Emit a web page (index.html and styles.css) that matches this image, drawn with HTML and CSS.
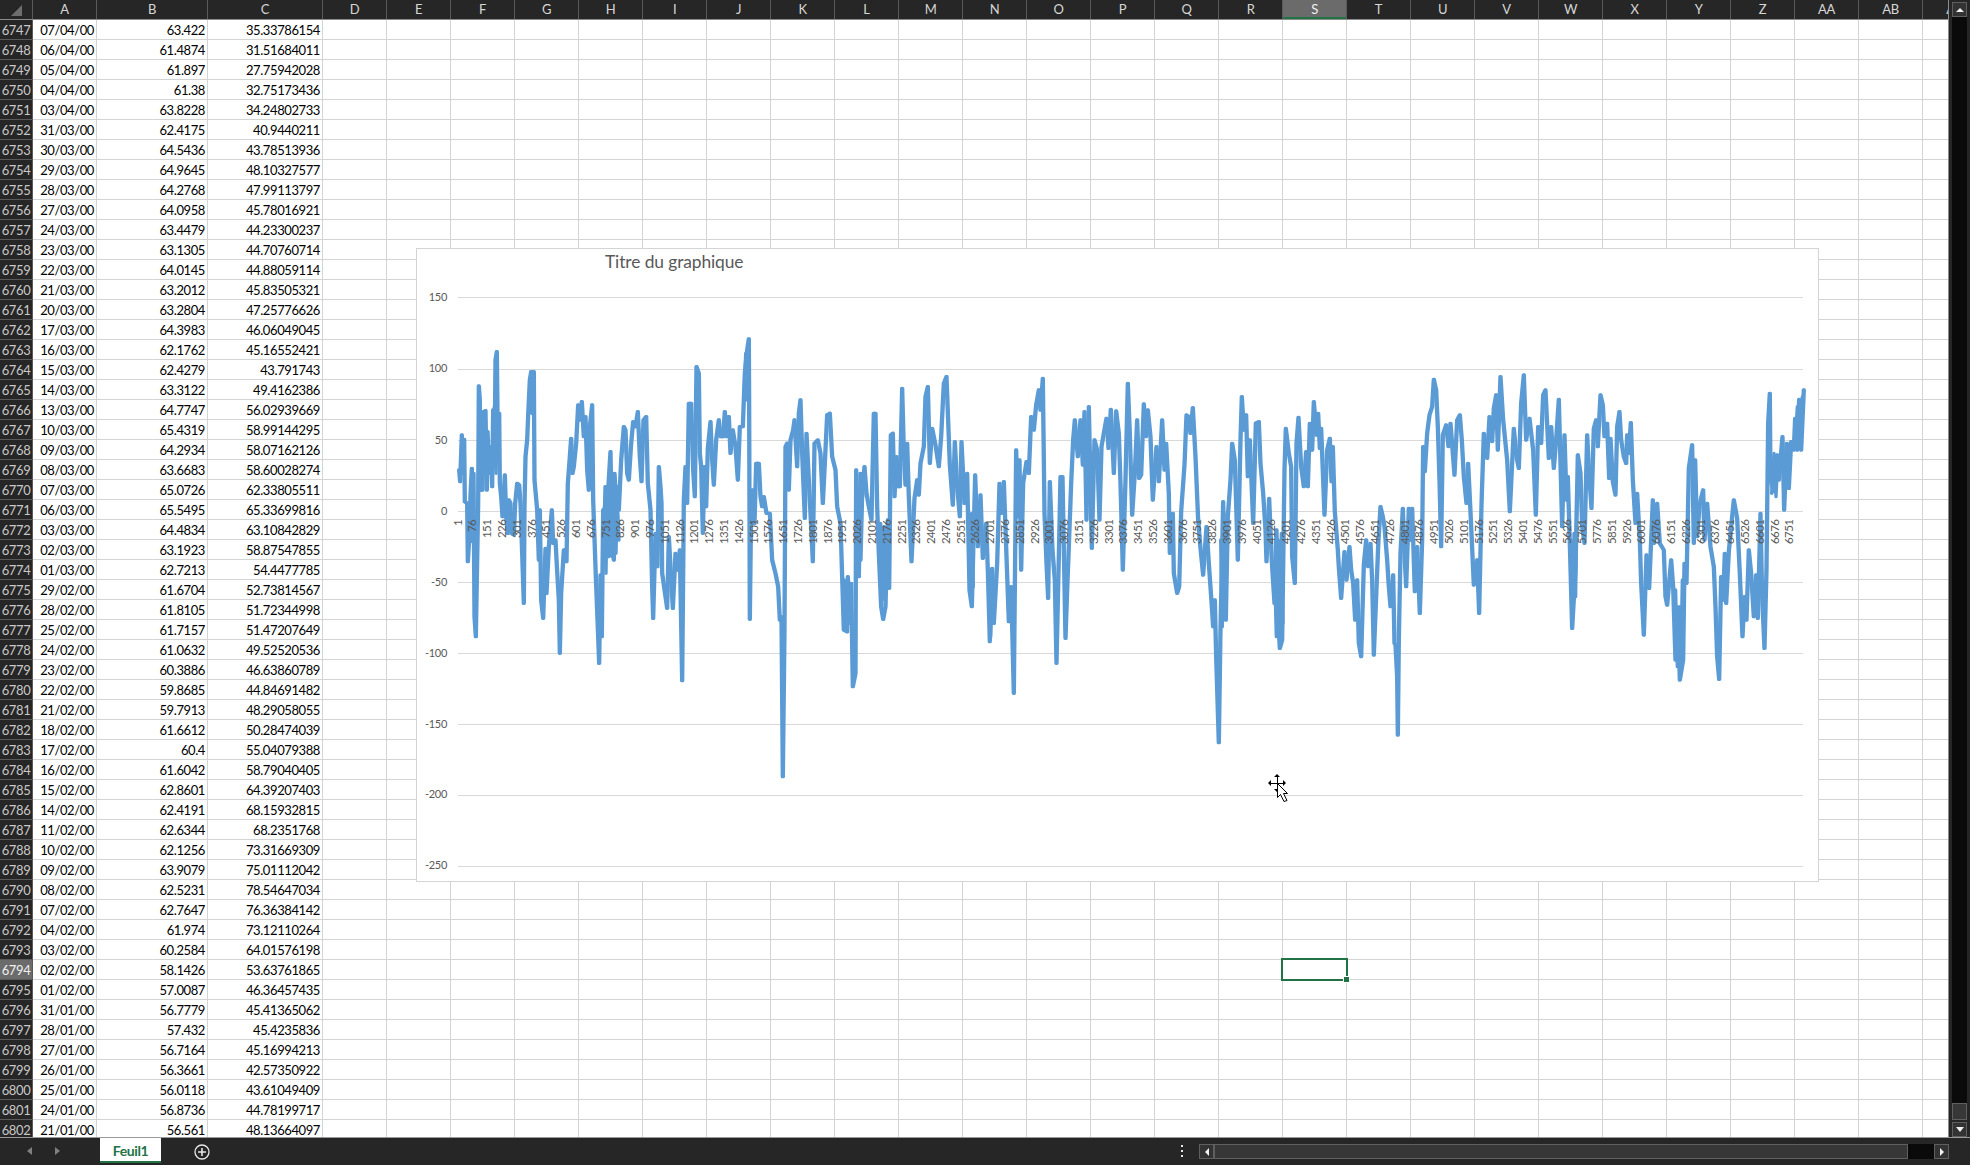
FILE: index.html
```html
<!DOCTYPE html>
<html>
<head>
<meta charset="utf-8">
<title>Feuil1</title>
<link rel="stylesheet" href="styles.css">
</head>
<body>
<div class="app">
  <div class="main">
    <div class="grid">
      <div class="colhead">
        <div class="corner"><span class="corner-tri"></span></div>
        <span class="c ca">A</span><span class="c cb">B</span><span class="c cc">C</span>
        <span class="c">D</span><span class="c">E</span><span class="c">F</span><span class="c">G</span><span class="c">H</span><span class="c">I</span><span class="c">J</span><span class="c">K</span><span class="c">L</span><span class="c">M</span><span class="c">N</span><span class="c">O</span><span class="c">P</span><span class="c">Q</span><span class="c">R</span><span class="c sel">S</span><span class="c">T</span><span class="c">U</span><span class="c">V</span><span class="c">W</span><span class="c">X</span><span class="c">Y</span><span class="c">Z</span><span class="c">AA</span><span class="c">AB</span><span class="c">AC</span>
      </div>
      <div class="row"><b>6747</b><span class="ca">07/04/00</span><span class="cb">63.422</span><span class="cc">35.33786154</span></div>
      <div class="row"><b>6748</b><span class="ca">06/04/00</span><span class="cb">61.4874</span><span class="cc">31.51684011</span></div>
      <div class="row"><b>6749</b><span class="ca">05/04/00</span><span class="cb">61.897</span><span class="cc">27.75942028</span></div>
      <div class="row"><b>6750</b><span class="ca">04/04/00</span><span class="cb">61.38</span><span class="cc">32.75173436</span></div>
      <div class="row"><b>6751</b><span class="ca">03/04/00</span><span class="cb">63.8228</span><span class="cc">34.24802733</span></div>
      <div class="row"><b>6752</b><span class="ca">31/03/00</span><span class="cb">62.4175</span><span class="cc">40.9440211</span></div>
      <div class="row"><b>6753</b><span class="ca">30/03/00</span><span class="cb">64.5436</span><span class="cc">43.78513936</span></div>
      <div class="row"><b>6754</b><span class="ca">29/03/00</span><span class="cb">64.9645</span><span class="cc">48.10327577</span></div>
      <div class="row"><b>6755</b><span class="ca">28/03/00</span><span class="cb">64.2768</span><span class="cc">47.99113797</span></div>
      <div class="row"><b>6756</b><span class="ca">27/03/00</span><span class="cb">64.0958</span><span class="cc">45.78016921</span></div>
      <div class="row"><b>6757</b><span class="ca">24/03/00</span><span class="cb">63.4479</span><span class="cc">44.23300237</span></div>
      <div class="row"><b>6758</b><span class="ca">23/03/00</span><span class="cb">63.1305</span><span class="cc">44.70760714</span></div>
      <div class="row"><b>6759</b><span class="ca">22/03/00</span><span class="cb">64.0145</span><span class="cc">44.88059114</span></div>
      <div class="row"><b>6760</b><span class="ca">21/03/00</span><span class="cb">63.2012</span><span class="cc">45.83505321</span></div>
      <div class="row"><b>6761</b><span class="ca">20/03/00</span><span class="cb">63.2804</span><span class="cc">47.25776626</span></div>
      <div class="row"><b>6762</b><span class="ca">17/03/00</span><span class="cb">64.3983</span><span class="cc">46.06049045</span></div>
      <div class="row"><b>6763</b><span class="ca">16/03/00</span><span class="cb">62.1762</span><span class="cc">45.16552421</span></div>
      <div class="row"><b>6764</b><span class="ca">15/03/00</span><span class="cb">62.4279</span><span class="cc">43.791743</span></div>
      <div class="row"><b>6765</b><span class="ca">14/03/00</span><span class="cb">63.3122</span><span class="cc">49.4162386</span></div>
      <div class="row"><b>6766</b><span class="ca">13/03/00</span><span class="cb">64.7747</span><span class="cc">56.02939669</span></div>
      <div class="row"><b>6767</b><span class="ca">10/03/00</span><span class="cb">65.4319</span><span class="cc">58.99144295</span></div>
      <div class="row"><b>6768</b><span class="ca">09/03/00</span><span class="cb">64.2934</span><span class="cc">58.07162126</span></div>
      <div class="row"><b>6769</b><span class="ca">08/03/00</span><span class="cb">63.6683</span><span class="cc">58.60028274</span></div>
      <div class="row"><b>6770</b><span class="ca">07/03/00</span><span class="cb">65.0726</span><span class="cc">62.33805511</span></div>
      <div class="row"><b>6771</b><span class="ca">06/03/00</span><span class="cb">65.5495</span><span class="cc">65.33699816</span></div>
      <div class="row"><b>6772</b><span class="ca">03/03/00</span><span class="cb">64.4834</span><span class="cc">63.10842829</span></div>
      <div class="row"><b>6773</b><span class="ca">02/03/00</span><span class="cb">63.1923</span><span class="cc">58.87547855</span></div>
      <div class="row"><b>6774</b><span class="ca">01/03/00</span><span class="cb">62.7213</span><span class="cc">54.4477785</span></div>
      <div class="row"><b>6775</b><span class="ca">29/02/00</span><span class="cb">61.6704</span><span class="cc">52.73814567</span></div>
      <div class="row"><b>6776</b><span class="ca">28/02/00</span><span class="cb">61.8105</span><span class="cc">51.72344998</span></div>
      <div class="row"><b>6777</b><span class="ca">25/02/00</span><span class="cb">61.7157</span><span class="cc">51.47207649</span></div>
      <div class="row"><b>6778</b><span class="ca">24/02/00</span><span class="cb">61.0632</span><span class="cc">49.52520536</span></div>
      <div class="row"><b>6779</b><span class="ca">23/02/00</span><span class="cb">60.3886</span><span class="cc">46.63860789</span></div>
      <div class="row"><b>6780</b><span class="ca">22/02/00</span><span class="cb">59.8685</span><span class="cc">44.84691482</span></div>
      <div class="row"><b>6781</b><span class="ca">21/02/00</span><span class="cb">59.7913</span><span class="cc">48.29058055</span></div>
      <div class="row"><b>6782</b><span class="ca">18/02/00</span><span class="cb">61.6612</span><span class="cc">50.28474039</span></div>
      <div class="row"><b>6783</b><span class="ca">17/02/00</span><span class="cb">60.4</span><span class="cc">55.04079388</span></div>
      <div class="row"><b>6784</b><span class="ca">16/02/00</span><span class="cb">61.6042</span><span class="cc">58.79040405</span></div>
      <div class="row"><b>6785</b><span class="ca">15/02/00</span><span class="cb">62.8601</span><span class="cc">64.39207403</span></div>
      <div class="row"><b>6786</b><span class="ca">14/02/00</span><span class="cb">62.4191</span><span class="cc">68.15932815</span></div>
      <div class="row"><b>6787</b><span class="ca">11/02/00</span><span class="cb">62.6344</span><span class="cc">68.2351768</span></div>
      <div class="row"><b>6788</b><span class="ca">10/02/00</span><span class="cb">62.1256</span><span class="cc">73.31669309</span></div>
      <div class="row"><b>6789</b><span class="ca">09/02/00</span><span class="cb">63.9079</span><span class="cc">75.01112042</span></div>
      <div class="row"><b>6790</b><span class="ca">08/02/00</span><span class="cb">62.5231</span><span class="cc">78.54647034</span></div>
      <div class="row"><b>6791</b><span class="ca">07/02/00</span><span class="cb">62.7647</span><span class="cc">76.36384142</span></div>
      <div class="row"><b>6792</b><span class="ca">04/02/00</span><span class="cb">61.974</span><span class="cc">73.12110264</span></div>
      <div class="row"><b>6793</b><span class="ca">03/02/00</span><span class="cb">60.2584</span><span class="cc">64.01576198</span></div>
      <div class="row"><b class="sel">6794</b><span class="ca">02/02/00</span><span class="cb">58.1426</span><span class="cc">53.63761865</span></div>
      <div class="row"><b>6795</b><span class="ca">01/02/00</span><span class="cb">57.0087</span><span class="cc">46.36457435</span></div>
      <div class="row"><b>6796</b><span class="ca">31/01/00</span><span class="cb">56.7779</span><span class="cc">45.41365062</span></div>
      <div class="row"><b>6797</b><span class="ca">28/01/00</span><span class="cb">57.432</span><span class="cc">45.4235836</span></div>
      <div class="row"><b>6798</b><span class="ca">27/01/00</span><span class="cb">56.7164</span><span class="cc">45.16994213</span></div>
      <div class="row"><b>6799</b><span class="ca">26/01/00</span><span class="cb">56.3661</span><span class="cc">42.57350922</span></div>
      <div class="row"><b>6800</b><span class="ca">25/01/00</span><span class="cb">56.0118</span><span class="cc">43.61049409</span></div>
      <div class="row"><b>6801</b><span class="ca">24/01/00</span><span class="cb">56.8736</span><span class="cc">44.78199717</span></div>
      <div class="row"><b>6802</b><span class="ca">21/01/00</span><span class="cb">56.561</span><span class="cc">48.13664097</span></div>
    </div>
    <div class="vscroll">
      <div class="sbtn"><i class="tri-up"></i></div>
      <div class="vtrack"></div>
      <div class="vthumb"></div>
      <div class="sbtn"><i class="tri-down"></i></div>
    </div>
  </div>

  <div class="bottombar">
    <div class="tabnav"><i class="nav-l"></i><i class="nav-r"></i></div>
    <div class="tab">Feuil1</div>
    <svg class="addsheet" width="16" height="16" viewBox="0 0 16 16"><circle cx="8" cy="8" r="7" fill="none" stroke="#e8e8e8" stroke-width="1.3"/><path d="M8 4v8M4 8h8" stroke="#e8e8e8" stroke-width="1.6"/></svg>
    <div class="dots"><i></i><i></i><i></i></div>
    <div class="hscroll">
      <div class="hbtn"><i class="tri-left"></i></div>
      <div class="hthumb"></div>
      <div class="htrack"></div>
      <div class="hbtn"><i class="tri-right"></i></div>
    </div>
  </div>

  <!-- chart floats over the sheet -->
  <div class="chart">
    <svg class="plot" width="1401" height="632" viewBox="417 249 1401 632">
      <g class="gridlines">
        <path d="M458 297.5H1803M458 369.5H1803M458 440.5H1803M458 511.5H1803M458 582.5H1803M458 653.5H1803M458 724.5H1803M458 795.5H1803M458 866.5H1803"/>
      </g>
      <!-- traced series, in 3x coords from (410,240) -->
      <g transform="translate(410 240) scale(.33333)">
        <polyline id="series" class="series" points="146,690 149,725 154,585 157,700 161,598 163,785 170,790 172,965 177,880 180,765 184,685 187,905 189,700 192,1130 196,1190 200,960 203,790 205,438 208,480 210,750 213,535 216,750 220,515 225,512 229,750 231,575 236,690 241,640 245,740 248,510 252,680 255,360 259,335 262,620 266,520 268,730 272,770 276,830 283,705 287,830 292,880 295,780 300,790 303,880 310,885 314,790 320,730 326,735 330,790 334,910 340,1090 342,800 345,650 350,600 353,525 358,420 362,395 365,520 370,395 372,720 380,810 385,960 388,810 392,1080 398,1135 405,925 408,1060 415,920 424,810 428,910 435,900 440,995 445,1080 448,1240 452,1060 460,930 468,965 472,730 478,650 482,595 486,700 490,680 497,610 503,495 508,540 514,485 520,590 525,530 530,690 535,750 538,560 545,495 548,780 556,1010 563,1190 566,1270 570,1005 574,1190 578,810 580,950 585,740 590,950 593,750 600,635 605,920 610,960 612,700 618,800 622,740 625,810 632,660 640,560 645,570 650,700 655,720 662,610 668,545 675,560 682,515 688,650 693,725 699,540 707,530 712,730 720,810 725,1040 728,1135 735,880 741,980 745,680 750,740 753,790 755,1000 770,1105 775,890 787,1105 795,940 802,990 808,930 815,1322 818,1000 820,780 825,680 830,790 835,490 842,490 848,690 853,770 858,380 865,400 868,640 872,680 877,880 882,680 887,800 892,625 900,545 905,660 910,735 917,600 925,540 930,590 938,590 943,515 948,590 955,530 960,640 967,570 975,620 982,720 988,560 997,560 1003,400 1010,330 1015,297 1016,500 1018,1138 1022,800 1026,750 1032,850 1037,670 1045,670 1050,770 1055,800 1060,770 1068,820 1078,820 1085,960 1095,1000 1103,1040 1108,1140 1113,1130 1117,1610 1122,1170 1125,620 1130,610 1135,750 1140,600 1148,570 1152,540 1157,630 1160,680 1165,520 1170,480 1175,640 1183,835 1188,580 1195,720 1203,880 1207,965 1212,610 1222,600 1230,640 1237,790 1243,670 1250,525 1258,520 1265,650 1275,690 1280,800 1290,850 1295,1010 1300,1170 1310,1175 1312,1010 1318,1150 1322,1030 1327,1340 1335,1300 1337,690 1340,800 1345,1010 1350,700 1355,770 1362,680 1368,760 1375,800 1383,840 1390,520 1395,520 1400,800 1405,940 1412,1100 1418,1138 1425,1100 1432,840 1436,1045 1441,585 1447,580 1452,770 1458,650 1462,740 1468,740 1475,445 1480,630 1485,735 1490,610 1495,770 1503,965 1512,775 1520,720 1525,765 1530,670 1540,620 1545,470 1552,440 1558,670 1565,565 1575,615 1585,680 1592,590 1600,430 1608,410 1618,675 1627,795 1633,605 1640,740 1648,830 1653,605 1662,790 1670,700 1677,1050 1684,1100 1694,705 1702,920 1710,765 1717,955 1727,850 1732,990 1738,1205 1745,985 1750,1150 1760,970 1767,730 1773,820 1780,725 1795,1145 1802,1040 1810,1360 1817,630 1823,830 1827,660 1832,990 1838,730 1848,665 1855,700 1862,530 1870,570 1877,495 1885,450 1890,510 1897,415 1902,820 1908,970 1913,1075 1918,725 1926,930 1933,1020 1938,1270 1945,950 1950,710 1956,710 1965,1195 1970,1050 1975,920 1982,730 1988,600 1993,540 2002,650 2010,540 2017,675 2022,515 2028,840 2035,500 2044,925 2052,600 2060,630 2067,840 2073,620 2080,580 2088,535 2094,625 2101,508 2110,700 2117,513 2125,580 2130,730 2137,990 2145,720 2152,430 2158,580 2165,825 2173,700 2180,540 2186,715 2192,705 2200,492 2207,590 2212,510 2220,590 2227,780 2238,620 2245,725 2255,540 2262,690 2267,610 2275,760 2278,940 2287,820 2290,1000 2300,1060 2306,1040 2312,815 2322,675 2328,525 2335,530 2340,580 2347,503 2355,650 2363,840 2370,925 2378,1005 2388,860 2395,970 2402,1070 2408,1160 2413,1080 2417,1250 2425,1508 2430,1170 2438,785 2446,1140 2452,830 2460,720 2465,610 2473,660 2482,960 2490,600 2494,470 2500,570 2507,525 2512,710 2518,600 2528,850 2536,550 2545,545 2550,670 2558,760 2565,870 2568,965 2576,775 2584,965 2592,1090 2598,870 2602,1120 2608,1225 2615,1200 2622,690 2626,565 2635,640 2642,680 2645,950 2653,1030 2658,610 2664,532 2672,680 2680,740 2687,635 2692,740 2698,550 2705,630 2710,485 2718,585 2723,520 2728,625 2732,565 2738,720 2742,825 2750,630 2758,595 2763,725 2767,620 2773,815 2782,930 2785,982 2792,1075 2802,935 2808,1020 2817,920 2822,990 2828,1030 2834,1140 2840,1020 2845,1210 2852,1250 2860,975 2867,900 2873,980 2880,910 2885,1020 2890,1245 2897,1070 2903,920 2910,800 2917,830 2922,860 2930,960 2935,1040 2940,1100 2948,1005 2952,1210 2955,1215 2960,1310 2962,1485 2965,1200 2970,940 2977,805 2982,940 2987,1040 2995,805 3000,900 3005,805 3013,1055 3020,920 3028,1120 3035,900 3038,620 3043,695 3050,580 3057,525 3065,500 3070,418 3077,450 3082,560 3087,720 3092,920 3097,585 3107,555 3114,620 3120,550 3132,705 3140,540 3148,525 3154,600 3160,710 3168,790 3173,670 3180,815 3190,1035 3200,960 3206,1120 3213,795 3220,580 3230,655 3237,530 3245,605 3250,505 3257,465 3262,630 3270,410 3278,540 3290,660 3298,815 3310,565 3318,650 3325,685 3332,490 3340,405 3347,600 3357,535 3368,630 3376,825 3383,560 3392,610 3398,465 3405,450 3415,655 3422,560 3430,685 3437,600 3445,478 3455,860 3462,585 3468,780 3472,710 3478,910 3485,1165 3495,990 3502,645 3510,700 3515,860 3522,910 3530,585 3536,700 3543,805 3550,565 3557,540 3562,620 3570,465 3577,495 3582,590 3590,550 3596,715 3600,595 3607,725 3615,765 3620,560 3627,515 3632,600 3640,650 3647,670 3650,585 3655,640 3661,548 3667,720 3675,850 3680,760 3688,900 3692,1030 3700,1185 3708,945 3716,1045 3727,780 3730,910 3740,790 3748,910 3760,930 3765,1070 3770,1095 3782,960 3788,1040 3795,1260 3802,1105 3808,1320 3818,1260 3822,970 3828,1030 3835,685 3845,615 3850,910 3854,660 3860,890 3868,790 3878,750 3882,900 3890,790 3900,920 3910,980 3915,1100 3920,1250 3926,1318 3932,1010 3938,1080 3943,940 3947,1090 3955,935 3962,860 3970,780 3980,835 3988,1000 3996,1190 4002,1070 4008,1140 4015,930 4022,1000 4030,1130 4037,1005 4042,1135 4050,820 4055,1070 4062,1225 4068,990 4073,550 4078,460 4080,720 4090,755 4100,645 4105,720 4116,590 4121,810 4129,610 4135,745 4142,605 4150,630 4154,535 4160,630 4166,478 4172,630 4180,450"/>
        <use href="#series" x="3"/>
        <!-- denser clusters where the daily noise piles up -->
        <polyline class="series" points="207,600 212,720 215,560 219,700 223,540 227,690 233,600 238,700 243,620 250,680 253,500 258,700 262,560 266,650"/>
        <polyline class="series" points="583,800 588,1000 592,780 597,950 603,760 607,950 613,780 618,940 622,780 627,900"/>
        <polyline class="series" points="1003,460 1007,340 1011,480 1014,320"/>
        <polyline class="series" points="1303,1020 1307,1160 1315,1020"/>
        <polyline class="series" points="1338,780 1343,980 1348,760 1353,960 1358,760"/>
        <polyline class="series" points="1412,850 1417,1080 1422,860 1427,1060 1432,860 1437,1040"/>
        <polyline class="series" points="1675,800 1680,1060 1685,820 1690,1040"/>
        <polyline class="series" points="1737,1000 1742,1190 1747,1000 1752,1140"/>
        <polyline class="series" points="2432,900 2437,1160 2442,820 2447,1130 2452,850"/>
        <polyline class="series" points="2594,1000 2599,1190 2604,900 2609,1200 2614,880 2619,1150"/>
        <polyline class="series" points="3482,900 3487,1150 3492,880 3497,1070 3500,800"/>
        <polyline class="series" points="3797,1050 3802,1280 3807,1100 3812,1290 3817,1020"/>
        <polyline class="series" points="4085,760 4092,640 4098,770 4104,650"/>
        <polyline class="series" points="4155,620 4162,500 4170,620 4177,470"/>
      </g>
      <text class="title" x="605" y="268">Titre du graphique</text>
      <g class="ylabels">
        <text x="447" y="301">150</text>
        <text x="447" y="372">100</text>
        <text x="447" y="444">50</text>
        <text x="447" y="515">0</text>
        <text x="447" y="586">-50</text>
        <text x="447" y="657">-100</text>
        <text x="447" y="728">-150</text>
        <text x="447" y="798">-200</text>
        <text x="447" y="869">-250</text>
      </g>
    </svg>
    <div class="xlabels"><span>1</span><span>76</span><span>151</span><span>226</span><span>301</span><span>376</span><span>451</span><span>526</span><span>601</span><span>676</span><span>751</span><span>826</span><span>901</span><span>976</span><span>1051</span><span>1126</span><span>1201</span><span>1276</span><span>1351</span><span>1426</span><span>1501</span><span>1576</span><span>1651</span><span>1726</span><span>1801</span><span>1876</span><span>1951</span><span>2026</span><span>2101</span><span>2176</span><span>2251</span><span>2326</span><span>2401</span><span>2476</span><span>2551</span><span>2626</span><span>2701</span><span>2776</span><span>2851</span><span>2926</span><span>3001</span><span>3076</span><span>3151</span><span>3226</span><span>3301</span><span>3376</span><span>3451</span><span>3526</span><span>3601</span><span>3676</span><span>3751</span><span>3826</span><span>3901</span><span>3976</span><span>4051</span><span>4126</span><span>4201</span><span>4276</span><span>4351</span><span>4426</span><span>4501</span><span>4576</span><span>4651</span><span>4726</span><span>4801</span><span>4876</span><span>4951</span><span>5026</span><span>5101</span><span>5176</span><span>5251</span><span>5326</span><span>5401</span><span>5476</span><span>5551</span><span>5626</span><span>5701</span><span>5776</span><span>5851</span><span>5926</span><span>6001</span><span>6076</span><span>6151</span><span>6226</span><span>6301</span><span>6376</span><span>6451</span><span>6526</span><span>6601</span><span>6676</span><span>6751</span></div>
  </div>

  <div class="selbox"><i></i></div>

  <svg class="cursor" width="24" height="30" viewBox="0 0 24 30">
    <path d="M1 9h16M9 1v8M9 9v8" stroke="#000" stroke-width="1" fill="none" shape-rendering="crispEdges"/>
    <path d="M9 0l3 3H6zM9 18l3-3H6zM0 9l3-3v6zM18 9l-3-3v6z" fill="#000"/>
    <path d="M9.5 9.5v14l3-3 3.5 7 3-1-3.5-7h4z" fill="#fff" stroke="#000" stroke-width="1"/>
  </svg>
</div>
</body>
</html>
```

FILE: styles.css
```css
html, body {
  margin: 0;
  padding: 0;
  width: 100%;
  height: 100%;
  background: #262626;
  overflow: hidden;
}

.app {
  position: relative;
  width: 1970px;
  height: 1165px;
  display: flex;
  flex-direction: column;
  font-family: Lato, "Liberation Sans", sans-serif;
  font-size: 13px;
  letter-spacing: -0.4px;
}

.main {
  flex: 1;
  min-height: 0;
  display: flex;
}

/* sheet */
.grid {
  flex: 1;
  min-width: 0;
  overflow: hidden;
  background: #fff;
}

.colhead {
  display: flex;
  height: 20px;
  background: #262626;
  border-bottom: 1px solid #8c8c8c;
  box-sizing: border-box;
}

.corner {
  flex: none;
  width: 33px;
  box-sizing: border-box;
  border-right: 1px solid #5a5a5a;
  position: relative;
}

.corner-tri {
  position: absolute;
  right: 10px;
  bottom: 3px;
  border-style: solid;
  border-width: 0 0 11px 11px;
  border-color: transparent transparent #6e6e6e transparent;
}

.c {
  flex: none;
  width: 64px;
  box-sizing: border-box;
  border-right: 1px solid #5a5a5a;
  text-align: center;
  line-height: 19px;
  color: #d6d6d6;
}

.c.ca { width: 64px; }
.c.cb { width: 111px; }
.c.cc { width: 115px; }

.c.sel {
  background: #6b6b6b;
  height: 19px;
  box-shadow: inset 0 -2px 0 #217346;
  color: #f2f2f2;
}

.row {
  display: flex;
  height: 20px;
  box-sizing: border-box;
  border-bottom: 1px solid #d4d4d4;
  line-height: 20px;
  color: #000;
  background: repeating-linear-gradient(to right, #fff 0, #fff 63px, #d4d4d4 63px, #d4d4d4 64px) 323px 0 no-repeat;
  background-size: 1700px 100%;
}

.row b {
  flex: none;
  width: 33px;
  margin-bottom: -1px;
  box-sizing: border-box;
  border-right: 1px solid #5a5a5a;
  border-bottom: 1px solid #5a5a5a;
  background: #262626;
  color: #c8c8c8;
  font-weight: 400;
  text-align: center;
}

.row b.sel {
  background: #6b6b6b;
  color: #f0f0f0;
}

.row .ca, .row .cb, .row .cc {
  flex: none;
  box-sizing: border-box;
  border-right: 1px solid #d4d4d4;
  padding-right: 2px;
  text-align: right;
  background: #fff;
}

.row .ca { width: 64px; }
.row .cb { width: 111px; }
.row .cc { width: 115px; }

/* vertical scrollbar */
.vscroll {
  flex: none;
  width: 22px;
  box-sizing: border-box;
  padding: 2px 3px 0 3px;
  border-left: 1px solid #8c8c8c;
  background: #262626;
  display: flex;
  flex-direction: column;
}

.sbtn {
  flex: none;
  height: 15px;
  box-sizing: border-box;
  border: 1px solid #5f5f5f;
  background: #333;
  display: flex;
  align-items: center;
  justify-content: center;
}

.vtrack {
  flex: 1;
  background: #0a0a0a;
}

.vthumb {
  flex: none;
  height: 17px;
  box-sizing: border-box;
  margin-bottom: 2px;
  border: 1px solid #5f5f5f;
  background: #373737;
}

.tri-up, .tri-down, .tri-left, .tri-right {
  display: block;
  width: 0;
  height: 0;
  border-style: solid;
}

.tri-up { border-width: 0 4px 4px 4px; border-color: transparent transparent #f0f0f0 transparent; }
.tri-down { border-width: 5px 4px 0 4px; border-color: #f0f0f0 transparent transparent transparent; }
.tri-left { border-width: 4px 4px 4px 0; border-color: transparent #f0f0f0 transparent transparent; }
.tri-right { border-width: 4px 0 4px 4px; border-color: transparent transparent transparent #f0f0f0; }

/* sheet tabs + horizontal scrollbar */
.bottombar {
  flex: none;
  height: 28px;
  box-sizing: border-box;
  border-top: 1px solid #9a9a9a;
  background: #262626;
  display: flex;
  align-items: flex-start;
}

.tabnav {
  flex: none;
  width: 100px;
  height: 27px;
  position: relative;
}

.nav-l, .nav-r {
  position: absolute;
  top: 9px;
  width: 0;
  height: 0;
  border-style: solid;
}

.nav-l { left: 27px; border-width: 4px 5px 4px 0; border-color: transparent #808080 transparent transparent; }
.nav-r { left: 55px; border-width: 4px 0 4px 5px; border-color: transparent transparent transparent #808080; }

.tab {
  flex: none;
  width: 61px;
  height: 25px;
  box-sizing: border-box;
  background: #fff;
  border-bottom: 2px solid #217346;
  color: #217346;
  font-weight: 700;
  font-size: 14px;
  line-height: 25px;
  text-align: center;
}

.addsheet {
  flex: none;
  margin: 6px 0 0 33px;
}

.dots {
  flex: none;
  margin: 7px 0 0 971px;
  width: 2px;
  display: flex;
  flex-direction: column;
  gap: 3px;
}

.dots i {
  display: block;
  width: 2px;
  height: 2px;
  background: #e8e8e8;
}

.hscroll {
  flex: none;
  margin: 6px 0 0 16px;
  width: 750px;
  height: 15px;
  display: flex;
  background: #0a0a0a;
}

.hbtn {
  flex: none;
  width: 15px;
  box-sizing: border-box;
  border: 1px solid #5f5f5f;
  background: #333;
  display: flex;
  align-items: center;
  justify-content: center;
}

.hthumb {
  flex: none;
  width: 694px;
  box-sizing: border-box;
  border: 1px solid #5f5f5f;
  background: #373737;
}

.htrack {
  flex: 1;
}

/* chart object */
.chart {
  position: absolute;
  left: 416px;
  top: 248px;
  width: 1401px;
  height: 632px;
  border: 1px solid #d4d4d4;
  background: #fff;
}

.plot {
  display: block;
}

.gridlines path {
  fill: none;
  stroke: #d9d9d9;
  stroke-width: 1;
}

.series {
  fill: none;
  stroke: #5b9bd5;
  stroke-width: 10;
  stroke-linejoin: round;
  stroke-linecap: round;
}

.title {
  font-size: 17.4px;
  letter-spacing: -0.1px;
  fill: #595959;
}

.ylabels text {
  font-size: 11px;
  letter-spacing: -0.3px;
  fill: #595959;
  text-anchor: end;
}

.xlabels {
  position: absolute;
  left: 33.6px;
  top: 271px;
  display: flex;
}

.xlabels span {
  flex: none;
  width: 14.8px;
  height: 30px;
  writing-mode: vertical-rl;
  transform: rotate(180deg);
  text-align: right;
  line-height: 14.8px;
  font-size: 11.5px;
  letter-spacing: -0.6px;
  color: #595959;
}

/* active cell S6794 */
.selbox {
  position: absolute;
  left: 1281px;
  top: 958px;
  width: 67px;
  height: 23px;
  box-sizing: border-box;
  border: 2px solid #217346;
}

.selbox i {
  position: absolute;
  right: -3px;
  bottom: -3px;
  width: 5px;
  height: 5px;
  background: #217346;
  outline: 1px solid #fff;
}

.cursor {
  position: absolute;
  left: 1268px;
  top: 774px;
}
```
